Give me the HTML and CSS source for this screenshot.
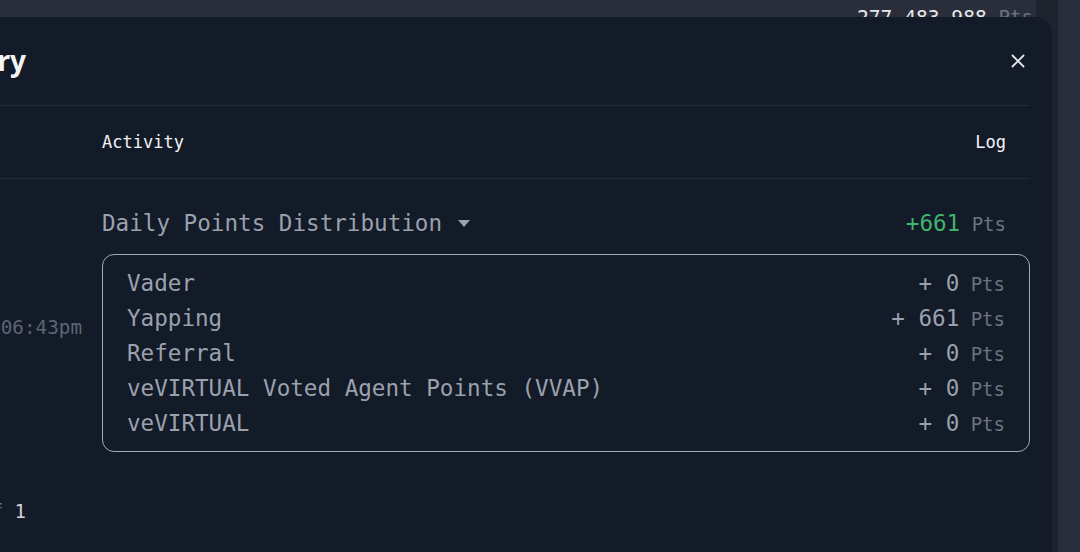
FILE: index.html
```html
<!DOCTYPE html>
<html lang="en">
<head>
    <meta charset="UTF-8">
    <meta name="viewport" content="width=device-width, initial-scale=1.0">
    <title>Points History</title>
    <link rel="stylesheet" href="styles.css">
</head>
<body>
    <div class="page">
        <div class="page-total">277,483,988 <span class="unit">Pts</span></div>
        <div class="scroll-track"></div>
    </div>

    <div class="modal">
        <header class="modal-header">
            <h2 class="modal-title">Points History</h2>
            <button class="close-btn" aria-label="Close">
                <svg width="16" height="16" viewBox="0 0 16 16" fill="none" stroke="currentColor" stroke-width="1.8" stroke-linecap="round">
                    <path d="M2.5 2.5l11 11M13.5 2.5l-11 11"/>
                </svg>
            </button>
        </header>

        <div class="history-table">
            <div class="table-head">
                <div class="col-time">Time</div>
                <div class="col-activity">Activity</div>
                <div class="col-log">Log</div>
            </div>

            <div class="table-row">
                <div class="col-time time-cell">Jun 12, 2025 06:43pm</div>
                <div class="col-activity">
                    <div class="summary">
                        <div class="summary-title">
                            Daily Points Distribution
                            <svg class="caret" width="12" height="7" viewBox="0 0 12 7"><path d="M0 0h12L6 7z" fill="currentColor"/></svg>
                        </div>
                        <div class="summary-total">+661<span class="unit"> Pts</span></div>
                    </div>
                    <div class="breakdown">
                        <div class="breakdown-row"><span>Vader</span><span>+ 0<span class="unit"> Pts</span></span></div>
                        <div class="breakdown-row"><span>Yapping</span><span>+ 661<span class="unit"> Pts</span></span></div>
                        <div class="breakdown-row"><span>Referral</span><span>+ 0<span class="unit"> Pts</span></span></div>
                        <div class="breakdown-row"><span>veVIRTUAL Voted Agent Points (VVAP)</span><span>+ 0<span class="unit"> Pts</span></span></div>
                        <div class="breakdown-row"><span>veVIRTUAL</span><span>+ 0<span class="unit"> Pts</span></span></div>
                    </div>
                </div>
            </div>
        </div>

        <div class="pagination">
            <div class="page-info">Page 1 <span class="muted">of</span> 1</div>
        </div>
    </div>
</body>
</html>
```

FILE: styles.css
```css
body {
    margin: 0;
    width: 1080px;
    height: 552px;
    overflow: hidden;
    background-color: #2a2e3a;
    font-family: "DejaVu Sans Mono", "Liberation Mono", monospace;
    color: #e5e7eb;
    position: relative;
}
.page {
    height: 100%;
}
.page-total {
    position: absolute;
    top: 5px;
    left: 857px;
    font-size: 19.6px;
    line-height: 24px;
    color: #e5e7eb;
    white-space: nowrap;
}
.page-total .unit {
    color: #6b7280;
}
.scroll-track {
    position: absolute;
    top: 0;
    left: 1036px;
    width: 22px;
    height: 100%;
    background-color: #1f232d;
}

/* modal overlay, its left part is scrolled off screen */
.modal {
    position: absolute;
    top: 17px;
    left: -300px;
    width: 1352px;
    height: 560px;
    box-sizing: border-box;
    padding: 0 22px 0 24px;
    background-color: #131a28;
    border-top-right-radius: 16px;
}
.modal-header {
    display: flex;
    justify-content: space-between;
    align-items: center;
    height: 89px;
    box-sizing: border-box;
    border-bottom: 1px solid #232a38;
}
.modal-title {
    width: 302px;
    margin: 0 0 2px 0;
    text-align: right;
    white-space: nowrap;
    font-family: "Noto Sans", "Open Sans", sans-serif;
    font-size: 28px;
    font-weight: 700;
    color: #f3f4f6;
}
.close-btn {
    width: 24px;
    height: 24px;
    margin-right: 0;
    padding: 0;
    border: none;
    background: none;
    color: #e5e7eb;
    display: flex;
    align-items: center;
    justify-content: center;
    cursor: pointer;
}

.history-table {
    display: flex;
    flex-direction: column;
}
.table-head, .table-row {
    display: grid;
    grid-template-columns: 378px 1fr;
}
.table-head {
    height: 72px;
    align-items: center;
    border-bottom: 1px solid #232a38;
    font-size: 17px;
    color: #f3f4f6;
    grid-template-columns: 378px 1fr auto;
}
.table-head .col-time {
    visibility: hidden;
}
.table-head .col-log {
    padding-right: 24px;
}
.col-time {
    text-align: right;
    padding-right: 20px;
}
.table-row {
    align-items: center;
    padding: 28px 0 24px;
}
.time-cell {
    font-size: 19.3px;
    color: #5d6574;
    white-space: nowrap;
    margin-bottom: 4px;
}

.summary {
    display: flex;
    justify-content: space-between;
    align-items: center;
    height: 32px;
    padding-right: 24px;
    font-size: 22.6px;
    color: #9aa1ad;
}
.summary-title {
    display: flex;
    align-items: center;
    gap: 16px;
}
.caret {
    color: #9aa1ad;
}
.summary-total {
    color: #40b36c;
}
.unit {
    font-size: 19px;
    color: #6b7280;
}
.breakdown {
    margin-top: 15px;
    border: 1px solid #a3aab6;
    border-radius: 12px;
    padding: 11px 24px 10px;
}
.breakdown-row {
    display: flex;
    justify-content: space-between;
    height: 35px;
    line-height: 35px;
    font-size: 22.6px;
    color: #9aa1ad;
    white-space: pre;
}

.pagination {
    margin-top: 23px;
    display: flex;
}
.page-info {
    width: 302px;
    text-align: right;
    font-size: 19px;
    line-height: 24px;
    color: #d1d5db;
    white-space: nowrap;
}
.muted {
    color: #6b7280;
}
```
